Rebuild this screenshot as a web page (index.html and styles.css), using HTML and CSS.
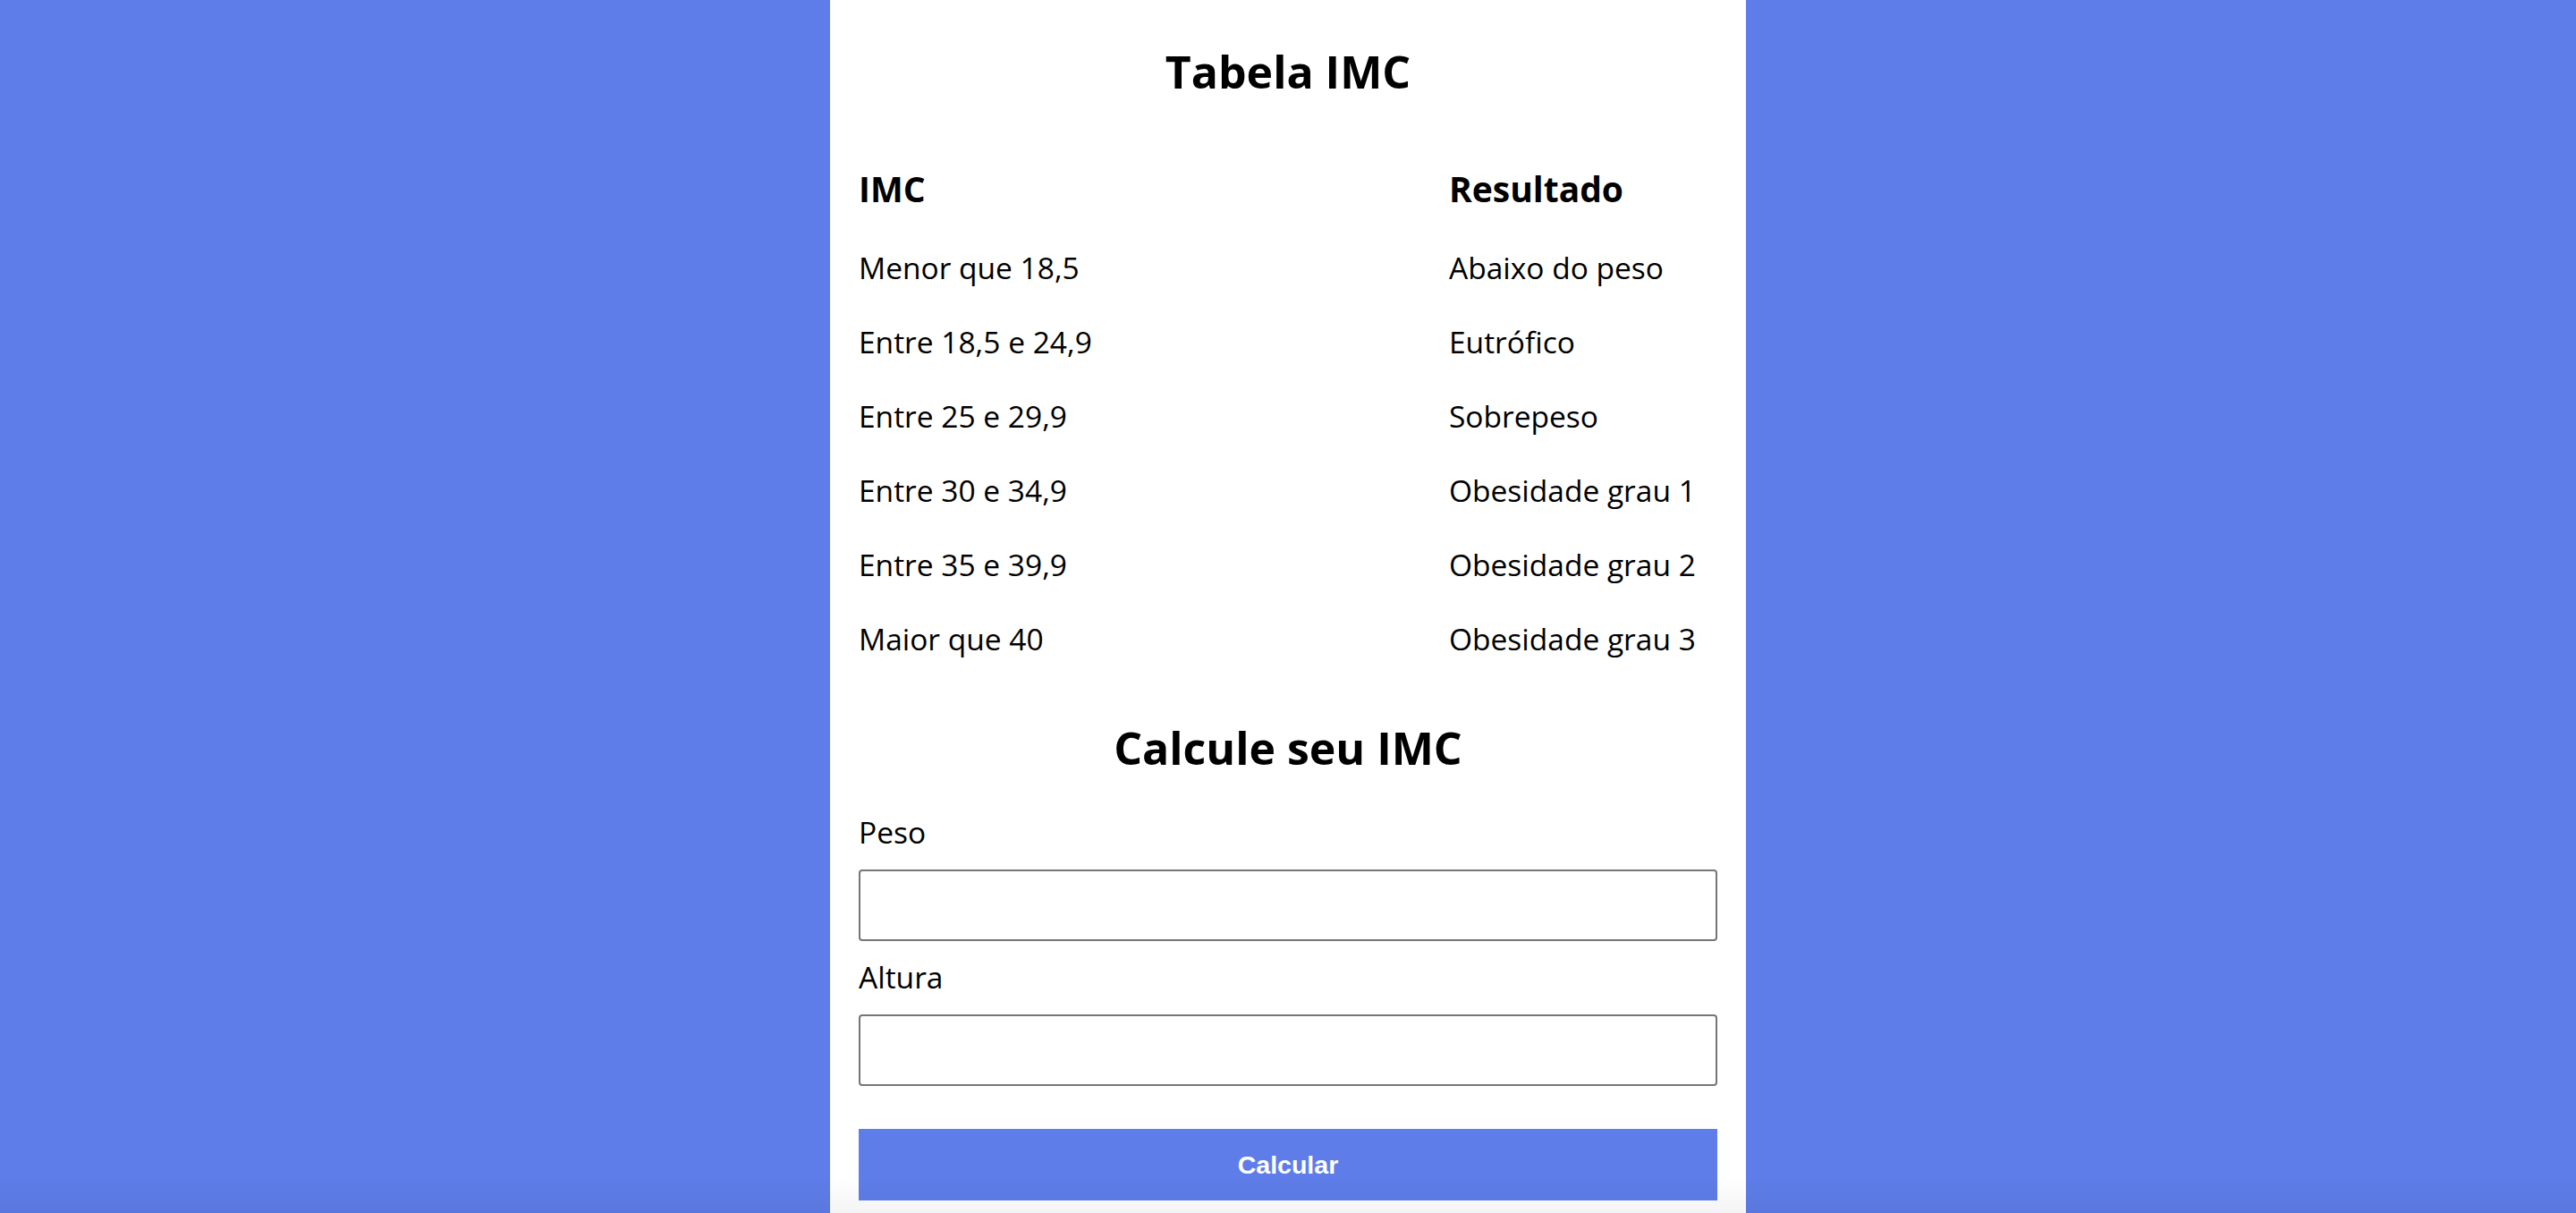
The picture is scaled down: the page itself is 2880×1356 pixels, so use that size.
FILE: index.html
```html
<!DOCTYPE html>
<html lang="pt-BR">
<head>
<meta charset="utf-8">
<title>Tabela IMC</title>
<link rel="stylesheet" href="styles.css">
</head>
<body>
<main class="card">
  <h1 class="title">Tabela IMC</h1>
  <div class="imc-table">
    <div class="th">IMC</div>
    <div class="th">Resultado</div>
    <div class="td">Menor que 18,5</div>
    <div class="td">Abaixo do peso</div>
    <div class="td">Entre 18,5 e 24,9</div>
    <div class="td">Eutrófico</div>
    <div class="td">Entre 25 e 29,9</div>
    <div class="td">Sobrepeso</div>
    <div class="td">Entre 30 e 34,9</div>
    <div class="td">Obesidade grau 1</div>
    <div class="td">Entre 35 e 39,9</div>
    <div class="td">Obesidade grau 2</div>
    <div class="td">Maior que 40</div>
    <div class="td">Obesidade grau 3</div>
  </div>
  <h2 class="title title-form">Calcule seu IMC</h2>
  <form class="form">
    <label class="label" for="peso">Peso</label>
    <input class="input" id="peso" type="text">
    <label class="label" for="altura">Altura</label>
    <input class="input" id="altura" type="text">
    <button class="button" type="button">Calcular</button>
  </form>
</main>
</body>
</html>
```
FILE: styles.css
```css
html, body {
  margin: 0;
  padding: 0;
}
body {
  background: #5e7de8;
  font-family: "Open Sans", "Noto Sans", sans-serif;
  font-size: 33.5px;
  color: #000;
  min-height: 100vh;
}
body::after {
  content: "";
  position: fixed;
  left: 0;
  right: 0;
  bottom: 0;
  height: 40px;
  background: linear-gradient(to bottom, rgba(0,0,0,0), rgba(0,0,0,0.045));
  pointer-events: none;
}
.card {
  width: 1024px;
  box-sizing: border-box;
  margin: 0 auto;
  padding: 44px 32px 40px;
  background: #fff;
  min-height: 100vh;
}
.title {
  margin: 0;
  font-size: 50px;
  line-height: 72px;
  font-weight: 700;
  text-align: center;
}
.imc-table {
  display: grid;
  grid-template-columns: 1fr 300px;
  margin-top: 69px;
}
.th {
  font-size: 39px;
  line-height: 52px;
  font-weight: 700;
  margin-bottom: 21px;
}
.td {
  line-height: 83px;
}
.title-form {
  margin-top: 44px;
}
.form {
  display: flex;
  flex-direction: column;
  margin-top: 36px;
}
.label {
  line-height: 44px;
  margin-bottom: 20px;
}
.input {
  box-sizing: border-box;
  height: 80px;
  width: 100%;
  border: 2px solid #767676;
  border-radius: 4px;
  margin: 0 0 18px;
  padding: 0 10px;
  font-size: 32px;
  background: #fff;
}
.button {
  margin-top: 30px;
  height: 80px;
  border: 0;
  background: #5e7de8;
  color: #fff;
  font-family: "Liberation Sans", Arial, sans-serif;
  font-weight: 700;
  font-size: 28.5px;
}
```
